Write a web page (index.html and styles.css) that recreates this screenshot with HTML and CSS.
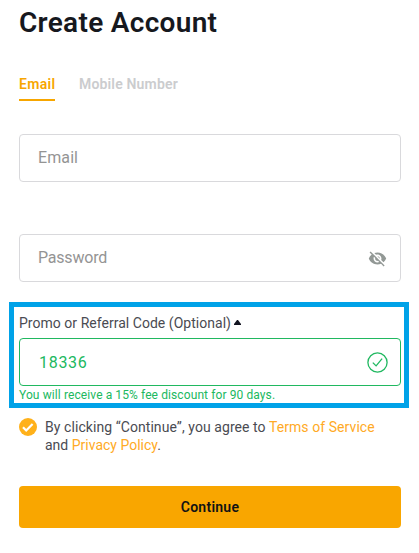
FILE: index.html
```html
<!DOCTYPE html>
<html lang="en">
<head>
<meta charset="utf-8">
<title>Create Account</title>
<link rel="stylesheet" href="styles.css">
</head>
<body>
<main class="signup">
  <h1 class="title"><span>Create Account</span></h1>
  <nav class="tabs">
    <a class="tab tab-active">Email</a>
    <a class="tab tab-mobile">Mobile Number</a>
  </nav>
  <div class="field field-email"><span class="ph-email">Email</span></div>
  <div class="field field-password">
    <span class="ph-password">Password</span>
    <svg class="eye" viewBox="0 0 24 24" width="19" height="19"><path fill="#929895" d="M12 7c2.76 0 5 2.24 5 5 0 .65-.13 1.26-.36 1.83l2.92 2.92c1.51-1.26 2.7-2.89 3.43-4.75-1.73-4.39-6-7.5-11-7.5-1.4 0-2.74.25-3.98.7l2.16 2.16C10.74 7.13 11.35 7 12 7zM2 4.27l2.28 2.28.46.46C3.08 8.3 1.78 10.02 1 12c1.73 4.39 6 7.5 11 7.5 1.55 0 3.03-.3 4.38-.84l.42.42L19.73 22 21 20.73 3.27 3 2 4.27zM7.53 9.8l1.55 1.55c-.05.21-.08.43-.08.65 0 1.66 1.34 3 3 3 .22 0 .44-.03.65-.08l1.55 1.55c-.67.33-1.41.53-2.2.53-2.76 0-5-2.24-5-5 0-.79.2-1.53.53-2.2zm4.31-.78l3.15 3.15.02-.16c0-1.66-1.34-3-3-3l-.17.01z"/></svg>
  </div>
  <section class="promo">
    <div class="promo-label"><span class="promo-text">Promo or Referral Code (Optional)</span><svg class="caret" width="7" height="5" viewBox="0 0 7 5"><path fill="#121420" d="M3 0h1l3 4v1H0V4z"/></svg></div>
    <div class="field field-promo">
      <span class="code">18336</span>
      <svg class="valid" width="21" height="21" viewBox="0 0 21 21" fill="none" stroke="#20b860" stroke-width="1.3"><circle cx="10.5" cy="10.5" r="9.6"/><path d="M5.8 10.6l3.3 3.3 6-7.2"/></svg>
    </div>
    <div class="hint"><span>You will receive a 15% fee discount for 90 days.</span></div>
  </section>
  <div class="agree">
    <svg class="check" width="18" height="18" viewBox="0 0 18 18"><circle cx="9" cy="9" r="9" fill="#ffb11a"/><path d="M4 9.3l3.2 3.2L13.6 6" fill="none" stroke="#fff" stroke-width="2.2"/></svg>
    <div class="terms">
      <div><span class="line-one">By clicking “Continue”, you agree to <a class="link">Terms of Service</a></span></div>
      <div><span class="line-two">and <a class="link">Privacy Policy</a>.</span></div>
    </div>
  </div>
  <button class="submit"><span>Continue</span></button>
</main>
</body>
</html>
```
FILE: styles.css
```css
* { box-sizing: border-box; }
body {
  margin: 0;
  background: #fff;
  color: #4a4b52;
  font-family: Roboto, "Liberation Sans", sans-serif;
  white-space: nowrap;
}
.signup { width: 419px; height: 553px; padding: 5px 9px 0; }
.title {
  margin: 0 10px;
  height: 36px;
  font-size: 28px;
  line-height: 36px;
  font-weight: 600;
  letter-spacing: 0.3px;
  color: #16181e;
}
.tabs { display: flex; gap: 24px; height: 30px; margin: 30px 10px 0; }
.tab { font-size: 14px; line-height: 26px; font-weight: 600; color: #cbccce; }
.tab-active { width: 36px; color: #f7a600; border-bottom: 2px solid #f7a600; letter-spacing: 0.3px; }
.tab-mobile { letter-spacing: 0.17px; }
.field {
  display: flex;
  align-items: center;
  justify-content: space-between;
  width: 382px;
  height: 48px;
  margin: 0 10px;
  padding: 0 13px 2px 18px;
  border: 1px solid #d9d9dc;
  border-radius: 4px;
  font-size: 16px;
  color: #949494;
}
.field-email { margin-top: 33px; }
.field-password { margin-top: 52px; }
.ph-email { letter-spacing: 0.1px; }
.ph-password { letter-spacing: -0.2px; }
.eye { position: relative; top: 1px; }
.promo { width: 400px; height: 106px; margin: 20px 0 0; border: 5px solid #00a2e8; padding: 6px 3px 0 5px; }
.promo-label { display: flex; align-items: center; height: 19px; font-size: 14px; gap: 3px; }
.promo-text { letter-spacing: 0.03px; }
.field-promo { margin: 6px 0 0; padding: 0 12px 0 19px; border-color: #20b860; color: #20b860; }
.code { letter-spacing: 0.7px; }
.hint { height: 17px; font-size: 12px; line-height: 18px; color: #20b860; letter-spacing: 0.1px; }
.agree { display: flex; gap: 8px; margin: 10px 10px 0; font-size: 14px; line-height: 18px; }
.check { flex: none; }
.line-one { letter-spacing: 0.07px; }
.line-two { letter-spacing: 0; }
.link { color: #ffaa25; }
.submit {
  display: block;
  width: 382px;
  height: 42px;
  margin: 32px 10px 0;
  padding: 0;
  border: 0;
  border-radius: 4px;
  background: #f9a600;
  color: #121214;
  font: 600 14px/42px Roboto, "Liberation Sans", sans-serif;
  letter-spacing: 0.25px;
}
```
